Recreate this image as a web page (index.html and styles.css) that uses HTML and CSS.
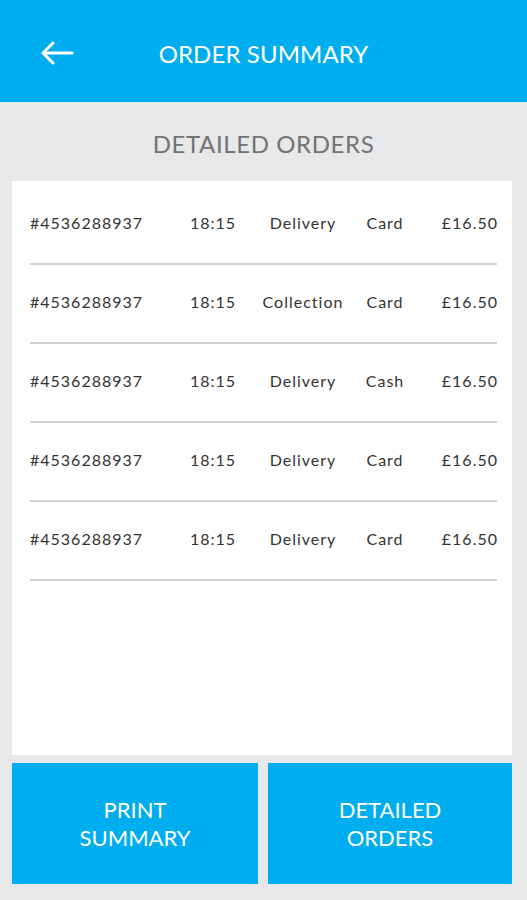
FILE: index.html
```html
<!DOCTYPE html>
<html>
<head>
<meta charset="utf-8">
<link rel="stylesheet" href="styles.css">
</head>
<body>
<div class="app">
  <header class="topbar">
    <div class="back">
      <svg width="34" height="24" viewBox="0 0 34 24"><path d="M32 12H3M13 2L3 12l10 10" fill="none" stroke="#fff" stroke-width="3" stroke-linecap="round" stroke-linejoin="round"/></svg>
    </div>
    <h1 class="title">ORDER SUMMARY</h1>
    <div></div>
  </header>
  <div class="section-title">DETAILED ORDERS</div>
  <main class="card">
    <div class="row"><span class="id">#4536288937</span><span class="time">18:15</span><span class="type">Delivery</span><span class="pay">Card</span><span class="price">£16.50</span></div>
    <div class="row"><span class="id">#4536288937</span><span class="time">18:15</span><span class="type">Collection</span><span class="pay">Card</span><span class="price">£16.50</span></div>
    <div class="row"><span class="id">#4536288937</span><span class="time">18:15</span><span class="type">Delivery</span><span class="pay">Cash</span><span class="price">£16.50</span></div>
    <div class="row"><span class="id">#4536288937</span><span class="time">18:15</span><span class="type">Delivery</span><span class="pay">Card</span><span class="price">£16.50</span></div>
    <div class="row"><span class="id">#4536288937</span><span class="time">18:15</span><span class="type">Delivery</span><span class="pay">Card</span><span class="price">£16.50</span></div>
  </main>
  <footer class="actions">
    <button class="btn">PRINT<br>SUMMARY</button>
    <button class="btn">DETAILED<br>ORDERS</button>
  </footer>
</div>
</body>
</html>
```
FILE: styles.css
```css
* { box-sizing: border-box; }
html, body { margin: 0; padding: 0; }
body {
  width: 527px;
  height: 900px;
  background: #e7e8ea;
  font-family: "Lato", "Open Sans", sans-serif;
  overflow: hidden;
}
.app {
  display: flex;
  flex-direction: column;
  height: 900px;
}
.topbar {
  height: 102px;
  background: #00aeef;
  display: grid;
  grid-template-columns: 1fr auto 1fr;
  align-items: center;
  padding: 0;
}
.back { display: flex; align-items: center; padding: 3px 0 0 40px; }
.title {
  margin: 0;
  color: #fff;
  font-weight: 400;
  font-size: 24px;
  letter-spacing: 0.1px;
  padding-top: 5px;
}
.section-title {
  height: 79px;
  display: flex;
  align-items: center;
  justify-content: center;
  color: #737373;
  font-size: 24px;
  letter-spacing: 0.6px;
  padding-top: 4px;
}
.card {
  flex: 1;
  margin: 0 15px 0 12px;
  background: #fff;
  padding: 5px 15px 0 18px;
}
.row {
  display: grid;
  grid-template-columns: 160px 68px 90px 74px 1fr;
  align-items: center;
  height: 79px;
  border-bottom: 2px solid #d0d0d0;
  font-size: 16px;
  letter-spacing: 1px;
  color: #333;
  padding-bottom: 4px;
}
.time { text-align: left; }
.type, .pay { text-align: center; }
.price { text-align: right; margin-right: -1px; }
.actions {
  display: grid;
  grid-template-columns: 246px 244px;
  gap: 10px;
  margin: 8px 15px 16px 12px;
}
.btn {
  height: 121px;
  border: 0;
  background: #00aeef;
  color: #fff;
  font-family: inherit;
  font-size: 22px;
  line-height: 28px;
  padding: 0;
}
```
